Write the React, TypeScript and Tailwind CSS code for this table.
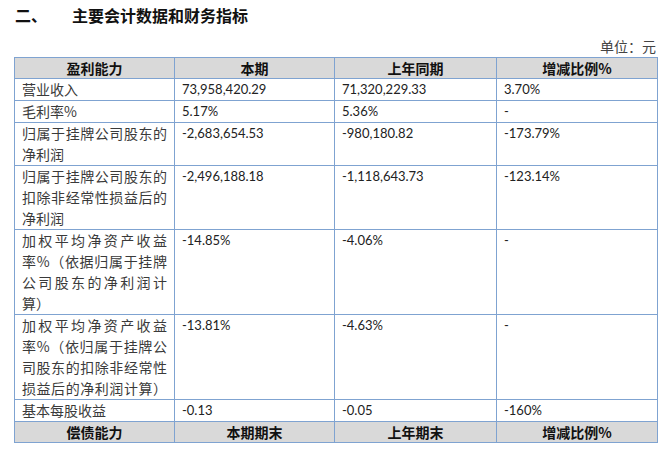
const cjk = "font-['Noto_Sans_CJK_SC',sans-serif]";
const num = "font-['Lato','Noto_Sans_CJK_SC',sans-serif]";

type Row = { label: string[]; cur: string; prev: string; pct: string };

const rows: Row[] = [
  { label: ["营业收入"], cur: "73,958,420.29", prev: "71,320,229.33", pct: "3.70%" },
  { label: ["毛利率%"], cur: "5.17%", prev: "5.36%", pct: "-" },
  { label: ["归属于挂牌公司股东的", "净利润"], cur: "-2,683,654.53", prev: "-980,180.82", pct: "-173.79%" },
  {
    label: ["归属于挂牌公司股东的", "扣除非经常性损益后的", "净利润"],
    cur: "-2,496,188.18",
    prev: "-1,118,643.73",
    pct: "-123.14%",
  },
  {
    label: ["加权平均净资产收益", "率%（依据归属于挂牌", "公司股东的净利润计", "算）"],
    cur: "-14.85%",
    prev: "-4.06%",
    pct: "-",
  },
  {
    label: ["加权平均净资产收益", "率%（依归属于挂牌公", "司股东的扣除非经常性", "损益后的净利润计算）"],
    cur: "-13.81%",
    prev: "-4.63%",
    pct: "-",
  },
  { label: ["基本每股收益"], cur: "-0.13", prev: "-0.05", pct: "-160%" },
];

function HeaderRow({ cells }: { cells: string[] }) {
  return (
    <tr className="bg-[#d9d9d9]">
      {cells.map((c) => (
        <th
          key={c}
          className={`border border-[#7fa3d1] h-[21px] p-0 text-center text-[14px] leading-[20px] font-bold text-[#111] ${cjk}`}
        >
          {c}
        </th>
      ))}
    </tr>
  );
}

export default function App() {
  return (
    <div className="w-[668px] h-[453px] bg-white overflow-hidden relative">
      <div className={`flex items-center h-[30px] pl-[15px] text-[16px] font-bold text-[#111] ${cjk}`}>
        <span className="w-[57px]">二、</span>
        <span>主要会计数据和财务指标</span>
      </div>
      <div className={`mt-[6px] pr-[12px] text-right text-[14px] leading-[20px] text-[#444] ${cjk}`}>单位：元</div>
      <table className="ml-[14px] mt-[1px] border-collapse table-fixed w-[643px]">
        <colgroup>
          <col className="w-[160px]" />
          <col className="w-[160px]" />
          <col className="w-[162px]" />
          <col className="w-[161px]" />
        </colgroup>
        <tbody>
          <HeaderRow cells={["盈利能力", "本期", "上年同期", "增减比例%"]} />
          {rows.map((r) => (
            <tr key={r.label.join("")}>
              <td className={`border border-[#7fa3d1] align-top px-[7px] text-[14px] leading-[21px] text-[#3a3a3a] ${cjk}`}>
                {r.label.map((l, i) => (
                  <div
                    key={l}
                    className={
                      i < r.label.length - 1 || r.label.length > 1 && l.length >= 9
                        ? "text-justify [text-align-last:justify]"
                        : ""
                    }
                  >
                    {l}
                  </div>
                ))}
              </td>
              {[r.cur, r.prev, r.pct].map((v, i) => (
                <td
                  key={i}
                  className={`border border-[#7fa3d1] align-top px-[7px] text-[13px] leading-[21px] text-[#222] ${num}`}
                >
                  {v}
                </td>
              ))}
            </tr>
          ))}
          <HeaderRow cells={["偿债能力", "本期期末", "上年期末", "增减比例%"]} />
        </tbody>
      </table>
    </div>
  );
}
